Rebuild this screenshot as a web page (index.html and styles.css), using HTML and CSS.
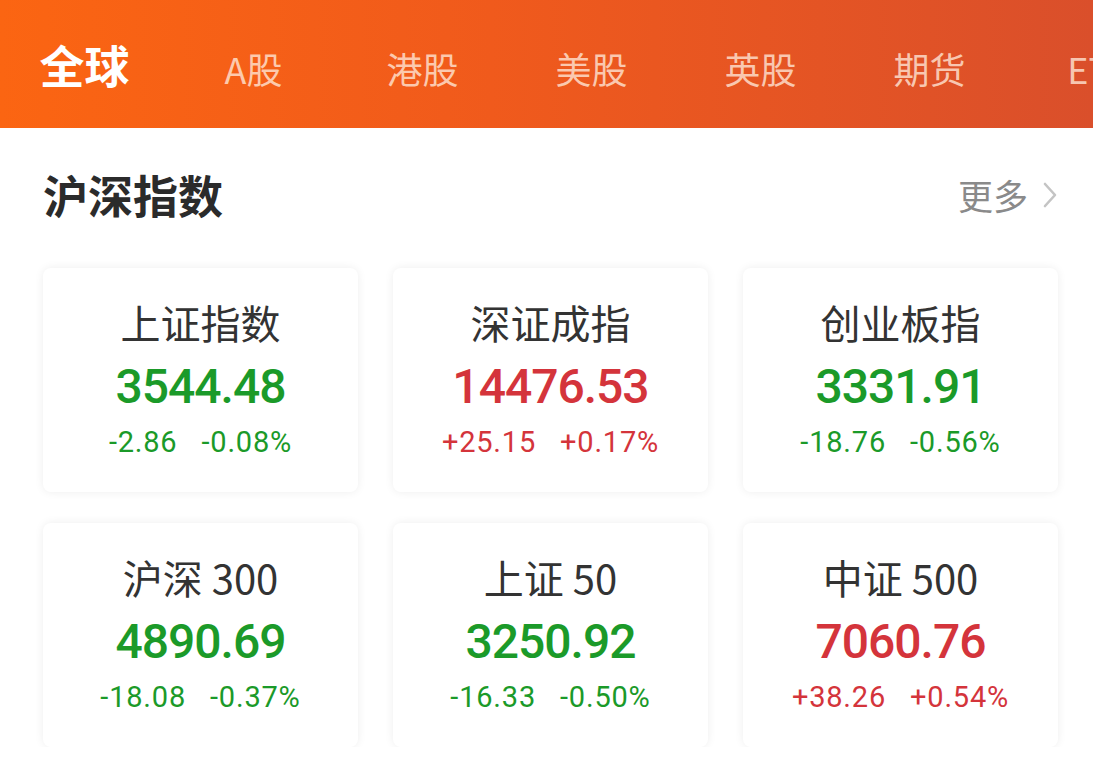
FILE: index.html
```html
<!DOCTYPE html>
<html lang="zh-CN">
<head>
<meta charset="utf-8">
<title>沪深指数</title>
<link rel="stylesheet" href="styles.css">
</head>
<body>
<header class="tabs">
  <div class="tab active">全球</div>
  <div class="tab">A股</div>
  <div class="tab">港股</div>
  <div class="tab">美股</div>
  <div class="tab">英股</div>
  <div class="tab">期货</div>
  <div class="tab">ETF</div>
</header>
<section class="section">
  <div class="section-head">
    <h2 class="section-title">沪深指数</h2>
    <div class="more">更多<svg class="chev" viewBox="0 0 16 28" width="16" height="28"><path d="M3 3 L13 14 L3 25" fill="none" stroke="#c4c4c4" stroke-width="2.6" stroke-linecap="round" stroke-linejoin="round"/></svg></div>
  </div>
  <div class="grid">
    <div class="card down">
      <div class="name">上证指数</div>
      <div class="value">3544.48</div>
      <div class="change"><span>-2.86</span><span>-0.08%</span></div>
    </div>
    <div class="card up">
      <div class="name">深证成指</div>
      <div class="value">14476.53</div>
      <div class="change"><span>+25.15</span><span>+0.17%</span></div>
    </div>
    <div class="card down">
      <div class="name">创业板指</div>
      <div class="value">3331.91</div>
      <div class="change"><span>-18.76</span><span>-0.56%</span></div>
    </div>
    <div class="card down">
      <div class="name">沪深 300</div>
      <div class="value">4890.69</div>
      <div class="change"><span>-18.08</span><span>-0.37%</span></div>
    </div>
    <div class="card down">
      <div class="name">上证 50</div>
      <div class="value">3250.92</div>
      <div class="change"><span>-16.33</span><span>-0.50%</span></div>
    </div>
    <div class="card up">
      <div class="name">中证 500</div>
      <div class="value">7060.76</div>
      <div class="change"><span>+38.26</span><span>+0.54%</span></div>
    </div>
  </div>
</section>
</body>
</html>
```

FILE: styles.css
```css
* { box-sizing: border-box; }
html, body {
  margin: 0;
  padding: 0;
  background: #ffffff;
  font-family: "Noto Sans CJK SC", "Noto Sans", sans-serif;
  overflow: hidden;
}
.tabs {
  height: 128px;
  display: flex;
  align-items: baseline;
  padding-top: 40px;
  background: linear-gradient(90deg, #fb6512 0%, #f05a1c 45%, #da4f2b 100%);
  white-space: nowrap;
  overflow: hidden;
}
.tab {
  flex: 0 0 169px;
  text-align: center;
  font-size: 36px;
  line-height: 50px;
  color: rgba(255, 232, 216, 0.78);
}
.tab.active {
  font-size: 45px;
  font-weight: 700;
  color: #ffffff;
}
.section {
  padding: 0 35px 0 43px;
}
.section-head {
  display: flex;
  justify-content: space-between;
  align-items: center;
  height: 134px;
}
.section-title {
  margin: 0;
  font-size: 45px;
  font-weight: 700;
  color: #2b2b2b;
  line-height: 60px;
}
.more {
  display: flex;
  align-items: center;
  gap: 14px;
  font-size: 35px;
  color: #8a8a8a;
  line-height: 50px;
}
.chev { display: block; }
.grid {
  display: grid;
  grid-template-columns: repeat(3, 315px);
  column-gap: 35px;
  row-gap: 31px;
  margin-top: 6px;
}
.card {
  height: 224px;
  background: #ffffff;
  border-radius: 8px;
  box-shadow: 0 0 10px rgba(0, 0, 0, 0.07);
  display: flex;
  flex-direction: column;
  align-items: center;
  padding-top: 29px;
}
.name {
  font-size: 40px;
  line-height: 50px;
  color: #333333;
}
.value {
  margin-top: 12px;
  font-family: Roboto, "Noto Sans", sans-serif;
  font-weight: 500;
  font-size: 48px;
  line-height: 56px;
  letter-spacing: -1px;
}
.change {
  margin-top: 10px;
  display: flex;
  gap: 24px;
  font-family: Roboto, "Noto Sans", sans-serif;
  font-size: 29px;
  line-height: 34px;
  letter-spacing: 0.8px;
}
.down .value, .down .change { color: #1b9a29; }
.up .value, .up .change { color: #d4343b; }
```
